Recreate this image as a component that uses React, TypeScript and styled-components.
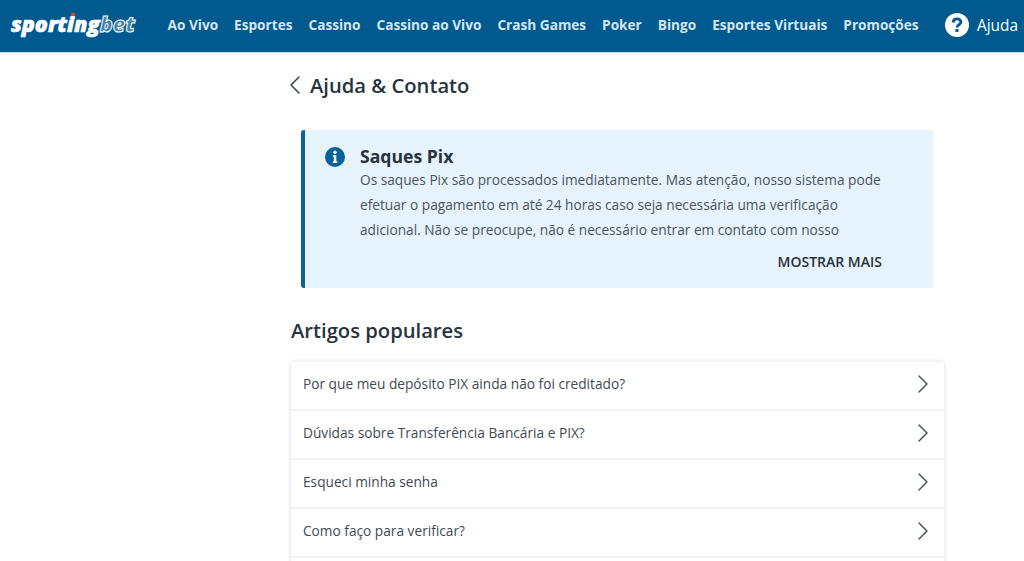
import React from 'react';
import styled, { createGlobalStyle } from 'styled-components';
import { ChevronLeft, ChevronRight } from 'lucide-react';

const GlobalStyle = createGlobalStyle`
  html, body {
    margin: 0;
    height: 100%;
    overflow: hidden;
    background: #fff;
    font-family: "Open Sans", "Liberation Sans", sans-serif;
  }
`;

const Header = styled.header`
  height: 53px;
  box-sizing: border-box;
  background: #005a8f;
  border-bottom: 1px solid #c5dcea;
  display: flex;
  align-items: center;
  padding: 0 6px 4px 11px;
`;

const Logo = styled.div`
  position: relative;
  width: 126px;
  margin-right: 30.5px;
  font-family: "Open Sans", sans-serif;
  font-size: 21.5px;
  font-style: italic;
  font-weight: 800;
  letter-spacing: 0;
  line-height: 26px;
  color: #fff;
  -webkit-text-stroke: 0.6px #fff;
  white-space: nowrap;
`;

const LogoBet = styled.span`
  color: rgba(255, 255, 255, 0.25);
  -webkit-text-stroke: 1px #fff;
`;

const LogoDot = styled.span`
  position: absolute;
  left: 60px;
  top: 2px;
  width: 4px;
  height: 3px;
  background: #d9453d;
  transform: skewX(-12deg);
`;

const Nav = styled.nav`
  display: flex;
  gap: 16px;
  flex: 1;
`;

const NavLink = styled.a`
  font-size: 13.63px;
  font-weight: 700;
  color: #d6e4ee;
  white-space: nowrap;
`;

const HelpLink = styled.div`
  display: flex;
  align-items: center;
  gap: 8px;
  margin-top: 2px;
  color: #fff;
  font-size: 15.4px;
`;

const Main = styled.main`
  width: 653px;
  margin-left: 291px;
`;

const TitleRow = styled.div`
  height: 66px;
  margin-left: -1px;
  display: flex;
  align-items: center;
  color: #2a3742;
`;

const Title = styled.h1`
  margin: -2px 0 0 -1px;
  font-size: 20.2px;
  font-weight: 600;
  color: #27333d;
`;

const Notice = styled.section`
  box-sizing: border-box;
  width: 632px;
  height: 158px;
  margin: 11px 0 0 10px;
  padding: 16px 51px 0 20px;
  display: flex;
  gap: 15px;
  background: #e6f2fc;
  border-left: 4px solid #0a6299;
  border-radius: 3px 0 0 3px;
`;

const NoticeBody = styled.div`
  flex: 1;
  margin-top: -1px;
`;

const NoticeTitle = styled.h2`
  margin: 0;
  font-size: 17.6px;
  line-height: 22px;
  font-weight: 700;
  color: #27333d;
`;

const NoticeText = styled.p`
  margin: 0;
  font-size: 13.7px;
  line-height: 25px;
  color: #4a555e;
`;

const ShowMore = styled.div`
  margin-top: 10px;
  text-align: right;
  font-size: 14px;
  line-height: 20px;
  font-weight: 600;
  color: #27333d;
`;

const SectionTitle = styled.h2`
  margin: 27px 0 17px;
  font-size: 20.2px;
  line-height: 30px;
  font-weight: 600;
  color: #27333d;
`;

const ArticleList = styled.div`
  background: #fff;
  box-shadow: 0 0 4px rgba(0, 0, 0, 0.16);
  border-radius: 2px;
`;

const ArticleRow = styled.div`
  box-sizing: border-box;
  height: 49px;
  padding: 0 12px 3px;
  display: flex;
  align-items: center;
  justify-content: space-between;
  border-bottom: 2px solid #f1f2f3;
  font-size: 13.7px;
  color: #3f4a53;
`;

const ArticleTitle = styled.span`
  margin-bottom: 2px;
`;

const navItems = ['Ao Vivo', 'Esportes', 'Cassino', 'Cassino ao Vivo', 'Crash Games', 'Poker', 'Bingo', 'Esportes Virtuais', 'Promoções'];
const articles = ['Por que meu depósito PIX ainda não foi creditado?', 'Dúvidas sobre Transferência Bancária e PIX?', 'Esqueci minha senha', 'Como faço para verificar?', ''];

const App: React.FC = () => (
  <>
    <GlobalStyle />
    <Header>
      <Logo>
        sporting<LogoBet>bet</LogoBet>
        <LogoDot />
      </Logo>
      <Nav>
        {navItems.map((item) => <NavLink key={item}>{item}</NavLink>)}
      </Nav>
      <HelpLink>
        <svg width="24" height="24" viewBox="0 0 24 24">
          <circle cx="12" cy="12" r="12" fill="#fff" />
          <path d="M8.200 9.600c0-2.300 1.700-3.700 3.900-3.700s3.800 1.300 3.800 3.100c0 2.800-3.700 2.500-3.700 5.400" fill="none" stroke="#005a8f" strokeWidth="2.900" />
          <rect x="10.500" y="16" width="3" height="3" rx=".5" fill="#005a8f" />
        </svg>
        Ajuda
      </HelpLink>
    </Header>
    <Main>
      <TitleRow>
        <ChevronLeft size={32} strokeWidth={1} style={{ marginLeft: -11, marginTop: -2 }} />
        <Title>Ajuda &amp; Contato</Title>
      </TitleRow>
      <Notice>
        <svg width="20" height="20" viewBox="0 0 20 20" style={{ flexShrink: 0, marginTop: 1 }}>
          <circle cx="10" cy="10" r="10" fill="#0a6299" />
          <circle cx="10" cy="5.300" r="1.700" fill="#fff" />
          <path d="M7.800 8.200h3.500v6.300h1v1.500H7.800v-1.500h1V9.700h-1z" fill="#fff" />
        </svg>
        <NoticeBody>
          <NoticeTitle>Saques Pix</NoticeTitle>
          <NoticeText>
            Os saques Pix são processados imediatamente. Mas atenção, nosso sistema pode efetuar o pagamento em até 24 horas caso seja necessária uma verificação adicional. Não se preocupe, não é necessário entrar em contato com nosso
          </NoticeText>
          <ShowMore>MOSTRAR MAIS</ShowMore>
        </NoticeBody>
      </Notice>
      <SectionTitle>Artigos populares</SectionTitle>
      <ArticleList>
        {articles.map((a, i) => (
          <ArticleRow key={i}>
            <ArticleTitle>{a}</ArticleTitle>
            {a && <ChevronRight size={32} strokeWidth={1} color="#3f4a53" style={{ marginRight: -7 }} />}
          </ArticleRow>
        ))}
      </ArticleList>
    </Main>
  </>
);

export default App;
